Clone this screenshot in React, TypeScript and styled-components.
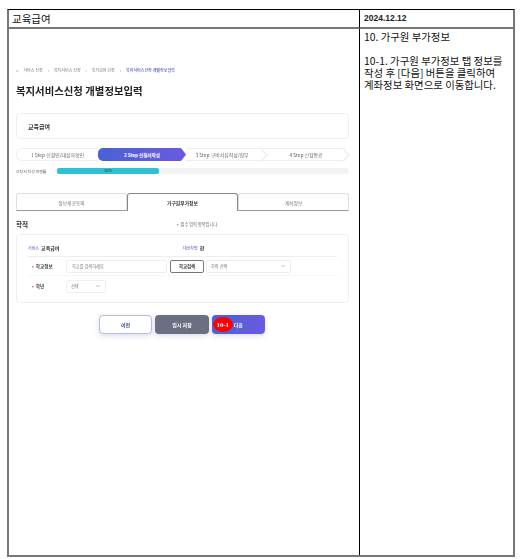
import React from 'react';
import styled, { createGlobalStyle } from 'styled-components';
import { ChevronDown } from 'lucide-react';

const GlobalStyle = createGlobalStyle`
  html, body {
    margin: 0;
    padding: 0;
    background: #fff;
    font-family: 'Noto Sans CJK KR', 'Noto Sans', sans-serif;
  }
`;

const Page = styled.div`
  width: 521px;
  height: 559px;
  padding: 9px 6px 5px 7px;
  box-sizing: border-box;
`;

const Sheet = styled.div`
  height: 100%;
  display: grid;
  grid-template-columns: 351px 1fr;
  grid-template-rows: 19px 1fr;
  border-top: 1px solid #000;
  border-left: 2px solid #777;
  border-right: 2px solid #777;
  border-bottom: 2px solid #777;
`;

const HeadLeft = styled.div`
  border-bottom: 2px solid #777;
  border-right: 1px solid #000;
  font-size: 10.5px;
  line-height: 17px;
  padding-left: 3px;
  color: #111;
`;

const HeadRight = styled.div`
  border-bottom: 2px solid #777;
  font-family: 'Liberation Sans', sans-serif;
  font-size: 8.5px;
  font-weight: 700;
  line-height: 17px;
  padding-left: 4px;
  color: #222;
`;

const Shot = styled.div`
  border-right: 1px solid #000;
  padding: 36px 10px 0 7px;
  filter: blur(0.45px);
`;

const Notes = styled.div`
  padding: 2px 6px 0 4px;
  font-size: 10.4px;
  line-height: 12px;
  color: #111;
`;

const NoteGap = styled.div`
  height: 12px;
`;

const Crumbs = styled.div`
  display: flex;
  align-items: center;
  gap: 5px;
  height: 9px;
  font-size: 4px;
  color: #777;
`;

const Crumb = styled.span<{ $current?: boolean }>`
  color: ${(p) => (p.$current ? '#4a55b8' : '#777')};
  font-weight: ${(p) => (p.$current ? 500 : 400)};
`;

const Title = styled.h1`
  margin: 8px 0 0;
  font-size: 10.4px;
  line-height: 18px;
  font-weight: 700;
  color: #222;
`;

const ServiceCard = styled.div`
  margin-top: 13px;
  height: 26px;
  border: 1px solid #eee;
  border-radius: 4px;
  box-sizing: border-box;
  padding-left: 11px;
  display: flex;
  align-items: center;
  font-size: 6px;
  font-weight: 700;
  color: #333;
`;

const Steps = styled.div`
  margin-top: 9px;
  height: 13px;
  display: grid;
  grid-template-columns: 82px 88px 81px 82px;
`;

const Step = styled.div<{ $first?: boolean; $last?: boolean; $shift?: number }>`
  position: relative;
  display: flex;
  align-items: center;
  justify-content: center;
  font-size: 4.9px;
  color: #666;
  box-sizing: border-box;
  border-top: 1px solid #eee;
  border-bottom: 1px solid #eee;
  border-left: ${(p) => (p.$first ? '1px solid #eee' : 'none')};
  border-radius: ${(p) => (p.$first ? '6px 0 0 6px' : '0')};
  margin-right: ${(p) => (p.$last ? '4px' : '0')};
  padding-right: ${(p) => p.$shift ?? 0}px;
`;

const ActiveStep = styled.div`
  display: flex;
  align-items: center;
  justify-content: center;
  font-size: 4.6px;
  font-weight: 700;
  color: #fff;
  background: linear-gradient(90deg, #4a62d6, #6a5ae0);
  clip-path: polygon(0 0, calc(100% - 5px) 0, 100% 50%, calc(100% - 5px) 100%, 0 100%);
  border-radius: 5px 0 0 5px;
`;

const Chevron = styled.i<{ $out?: boolean }>`
  position: absolute;
  right: ${(p) => (p.$out ? '-3px' : '1px')};
  top: 1.5px;
  width: 8px;
  height: 8px;
  box-sizing: border-box;
  border-top: 1px solid #e8e8e8;
  border-right: 1px solid #e8e8e8;
  transform: rotate(45deg);
`;

const ProgressRow = styled.div`
  margin-top: 6px;
  display: flex;
  align-items: center;
  height: 7px;
`;

const ProgressLabel = styled.span`
  width: 41px;
  font-size: 3.9px;
  color: #555;
`;

const Track = styled.div`
  flex: 1;
  height: 6px;
  background: #f3f3f3;
  border-radius: 2px;
`;

const Fill = styled.div`
  height: 100%;
  background: #2fc1d3;
  border-radius: 2px;
  display: flex;
  align-items: center;
  justify-content: center;
  font-size: 3.8px;
  color: #333;
`;

const Tabs = styled.div`
  margin-top: 19px;
  display: grid;
  grid-template-columns: 111px 111px 111px;
  height: 18px;
`;

const Tab = styled.div<{ $active?: boolean }>`
  display: flex;
  align-items: center;
  justify-content: center;
  font-size: 4.8px;
  box-sizing: border-box;
  color: ${(p) => (p.$active ? '#333' : '#777')};
  font-weight: ${(p) => (p.$active ? 700 : 400)};
  border: 1px solid ${(p) => (p.$active ? '#888' : '#ddd')};
  border-bottom: ${(p) => (p.$active ? 'none' : '1px solid #999')};
  border-radius: 3px 3px 0 0;
`;

const SectionRow = styled.div`
  margin-top: 6px;
  height: 14px;
  display: flex;
  align-items: center;
`;

const SectionTitle = styled.h2`
  width: 161px;
  margin: 0;
  font-size: 6.6px;
  font-weight: 700;
  color: #333;
`;

const Required = styled.span`
  font-size: 4.2px;
  color: #666;
`;

const Dot = styled.b`
  color: #e0344a;
  margin-right: 2px;
`;

const FormCard = styled.div`
  margin-top: 3px;
  height: 69px;
  border: 1px solid #eee;
  border-radius: 4px;
  box-sizing: border-box;
  padding: 7px 11px 0;
`;

const InfoRow = styled.div`
  display: grid;
  grid-template-columns: 155px 1fr;
  height: 15px;
  padding-bottom: 3px;
  box-sizing: border-box;
  align-items: center;
  border-bottom: 1px solid #eee;
  font-size: 5px;
  font-weight: 700;
  color: #333;
`;

const InfoKey = styled.span`
  font-size: 4px;
  font-weight: 400;
  color: #4a55b8;
  margin-right: 2px;
`;

const FieldRow = styled.div<{ $ruled?: boolean }>`
  display: flex;
  align-items: center;
  box-sizing: border-box;
  height: ${(p) => (p.$ruled ? '19px' : '20px')};
  border-bottom: ${(p) => (p.$ruled ? '1px dotted #eee' : 'none')};
`;

const FieldLabel = styled.span`
  width: 38px;
  padding-left: 4px;
  box-sizing: border-box;
  font-size: 4.6px;
  font-weight: 700;
  color: #444;
`;

const Input = styled.div`
  width: 101px;
  height: 13px;
  margin-right: 3px;
  padding-left: 5px;
  box-sizing: border-box;
  border: 1px solid #eee;
  border-radius: 2px;
  display: flex;
  align-items: center;
  font-size: 4.2px;
  color: #777;
`;

const SearchButton = styled.div`
  width: 34px;
  height: 13px;
  margin-right: 2px;
  box-sizing: border-box;
  border: 1px solid #777;
  border-radius: 2px;
  display: flex;
  align-items: center;
  justify-content: center;
  font-size: 4.4px;
  font-weight: 700;
  color: #333;
`;

const Select = styled.div<{ $w: number }>`
  width: ${(p) => p.$w}px;
  height: 13px;
  padding: 0 4px;
  box-sizing: border-box;
  border: 1px solid #eee;
  border-radius: 2px;
  display: flex;
  align-items: center;
  justify-content: space-between;
  font-size: 4.2px;
  color: #777;
`;

const Actions = styled.div`
  margin-top: 12px;
  display: flex;
  justify-content: center;
  gap: 3px;
  padding-right: 1px;
`;

const Action = styled.div<{ $kind: 'line' | 'gray' | 'main' }>`
  position: relative;
  width: 53.5px;
  height: 19px;
  box-sizing: border-box;
  border-radius: 4px;
  display: flex;
  align-items: center;
  justify-content: ${(p) => (p.$kind === 'main' ? 'flex-start' : 'center')};
  padding-left: ${(p) => (p.$kind === 'main' ? '22px' : '0')};
  font-size: 5px;
  font-weight: 700;
  box-shadow: 0 2px 5px rgba(90, 100, 180, 0.22);
  color: ${(p) => (p.$kind === 'line' ? '#3a4690' : '#fff')};
  border: ${(p) => (p.$kind === 'line' ? '1px solid #b4bde0' : 'none')};
  background: ${(p) =>
    p.$kind === 'gray'
      ? '#6c6e82'
      : p.$kind === 'main'
        ? 'linear-gradient(90deg, #4a62d6, #6a5ae0)'
        : '#fff'};
`;

const Marker = styled.span`
  position: absolute;
  left: 1px;
  top: 2px;
  width: 20px;
  height: 15px;
  border-radius: 50%;
  background: #f00;
  color: #fff;
  display: flex;
  align-items: center;
  justify-content: center;
  font-family: 'DejaVu Serif', serif;
  font-size: 5px;
  font-weight: 700;
`;

export default function App() {
  return (
    <Page>
      <GlobalStyle />
      <Sheet>
        <HeadLeft>교육급여</HeadLeft>
        <HeadRight>2024.12.12</HeadRight>
        <Shot>
          <Crumbs>
            <Crumb>⌂</Crumb>
            <Crumb>서비스 신청</Crumb>
            <Crumb>›</Crumb>
            <Crumb>복지서비스 신청</Crumb>
            <Crumb>›</Crumb>
            <Crumb>복지급여 신청</Crumb>
            <Crumb>›</Crumb>
            <Crumb $current>복지서비스신청 개별정보입력</Crumb>
          </Crumbs>
          <Title>복지서비스신청 개별정보입력</Title>
          <ServiceCard>교육급여</ServiceCard>
          <Steps>
            <Step $first>1 Step 신청인/대상자확인</Step>
            <ActiveStep>2 Step 신청서작성</ActiveStep>
            <Step $shift={9}>
              3 Step 구비서류작성/첨부
              <Chevron />
            </Step>
            <Step $last>
              4 Step 신청완료
              <Chevron $out />
            </Step>
          </Steps>
          <ProgressRow>
            <ProgressLabel>신청서 작성 진행률</ProgressLabel>
            <Track>
              <Fill style={{ width: '35%' }}>35%</Fill>
            </Track>
          </ProgressRow>
          <Tabs>
            <Tab>정보제공동의</Tab>
            <Tab $active>가구원부가정보</Tab>
            <Tab>계좌정보</Tab>
          </Tabs>
          <SectionRow>
            <SectionTitle>학적</SectionTitle>
            <Required>
              <Dot>•</Dot>필수 입력 항목입니다.
            </Required>
          </SectionRow>
          <FormCard>
            <InfoRow>
              <span>
                <InfoKey>서비스</InfoKey>교육급여
              </span>
              <span>
                <InfoKey>대상자명</InfoKey>한
              </span>
            </InfoRow>
            <FieldRow $ruled>
              <FieldLabel>
                <Dot>•</Dot>학교정보
              </FieldLabel>
              <Input>학교를 검색하세요</Input>
              <SearchButton>학교검색</SearchButton>
              <Select $w={85}>
                학적 선택
                <ChevronDown size={6} />
              </Select>
            </FieldRow>
            <FieldRow>
              <FieldLabel>
                <Dot>•</Dot>학년
              </FieldLabel>
              <Select $w={40}>
                선택
                <ChevronDown size={6} />
              </Select>
            </FieldRow>
          </FormCard>
          <Actions>
            <Action $kind="line">이전</Action>
            <Action $kind="gray">임시 저장</Action>
            <Action $kind="main">
              <Marker>10-1</Marker>
              다음
            </Action>
          </Actions>
        </Shot>
        <Notes>
          10. 가구원 부가정보
          <NoteGap />
          10-1. 가구원 부가정보 탭 정보를
          <br />
          작성 후 [다음] 버튼을 클릭하여
          <br />
          계좌정보 화면으로 이동합니다.
        </Notes>
      </Sheet>
    </Page>
  );
}
